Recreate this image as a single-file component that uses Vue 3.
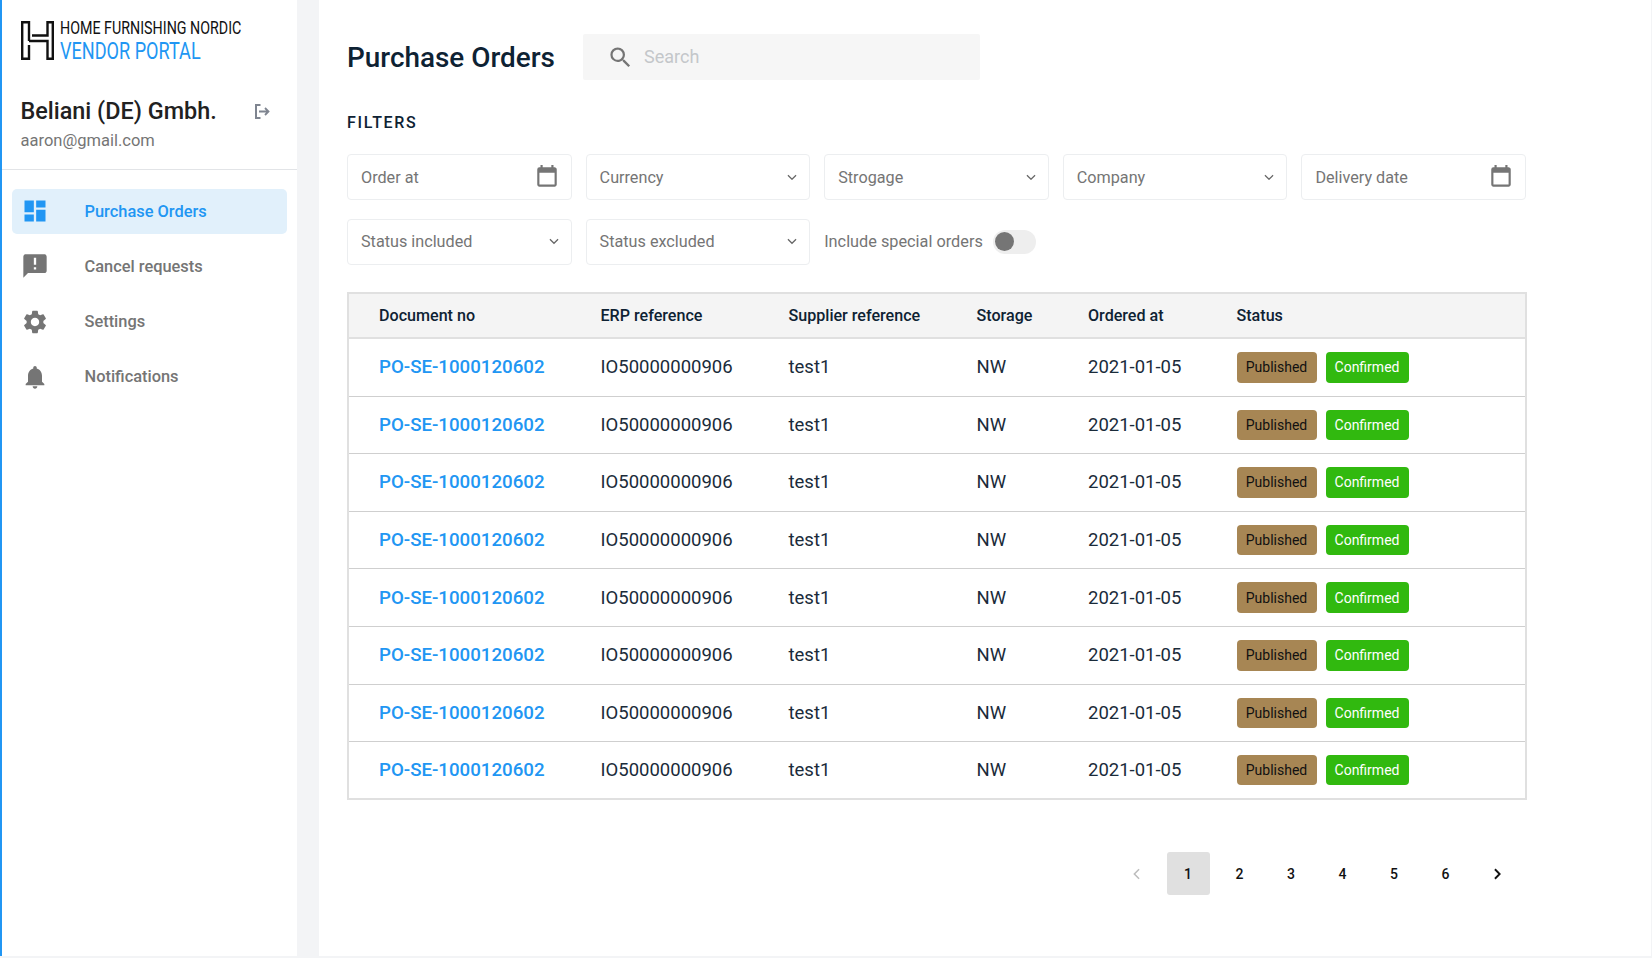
<script setup>
const nav = [
  { label: 'Purchase Orders', icon: 'dash', active: true },
  { label: 'Cancel requests', icon: 'alert' },
  { label: 'Settings', icon: 'gear' },
  { label: 'Notifications', icon: 'bell' }
]
const rows = Array.from({ length: 8 }, (_, i) => i)
const pages = [1, 2, 3, 4, 5, 6]
</script>

<template>
  <div class="page">
    <aside class="sidebar">
      <div class="logo">
        <svg class="logo-mark" viewBox="0 0 33 39" width="33" height="39">
          <path d="M8 20V1.200H1.200v36.600H8V24M8 20h18.500v17.800h5.300V1.200h-5.300v13.300H11" fill="none" stroke="#111" stroke-width="2.400" />
        </svg>
        <div class="logo-text">
          <span class="logo-top">HOME FURNISHING NORDIC</span>
          <span class="logo-bottom">VENDOR PORTAL</span>
        </div>
      </div>
      <div class="account">
        <div class="account-name">
          <span>Beliani (DE) Gmbh.</span>
          <svg viewBox="0 0 16 15" width="16" height="15" class="logout">
            <path d="M5.500 1H1v13h4.500" fill="none" stroke="#7f8590" stroke-width="2" />
            <path d="M4 7.500h9M10 4l3.500 3.500L10 11" fill="none" stroke="#7f8590" stroke-width="1.800" />
          </svg>
        </div>
        <div class="account-mail">aaron@gmail.com</div>
      </div>
      <nav class="nav">
        <a v-for="n in nav" :key="n.label" class="nav-item" :class="{ active: n.active }">
          <svg class="nav-icon" viewBox="0 0 24 24" width="28" height="28">
            <path v-if="n.icon === 'dash'" d="M3 13h8V3H3zm0 8h8v-6H3zm10 0h8V11h-8zm0-18v6h8V3z" />
            <path v-else-if="n.icon === 'alert'" d="M20 2H4c-1.100 0-2 .9-2 2v18l4-4h14c1.100 0 2-.9 2-2V4c0-1.100-.9-2-2-2zm-7 9h-2V5h2zm0 4h-2v-2h2z" />
            <path v-else-if="n.icon === 'gear'" d="M19.140 12.940c.04-.3.060-.61.060-.94 0-.32-.02-.64-.07-.94l2.030-1.580c.18-.14.230-.41.120-.61l-1.920-3.320c-.12-.22-.37-.29-.59-.22l-2.390.96c-.5-.38-1.030-.7-1.620-.94l-.36-2.540c-.04-.24-.24-.41-.48-.41h-3.840c-.24 0-.43.170-.47.41l-.36 2.540c-.59.240-1.130.57-1.620.94l-2.390-.96c-.22-.08-.47 0-.59.220L2.740 8.870c-.12.210-.08.470.12.610l2.030 1.580c-.05.3-.09.630-.09.940s.02.640.07.940l-2.030 1.580c-.18.140-.23.410-.12.610l1.920 3.320c.12.220.37.290.59.220l2.390-.96c.5.380 1.030.7 1.620.94l.36 2.540c.05.240.24.410.48.410h3.840c.24 0 .44-.17.470-.41l.36-2.540c.59-.24 1.130-.56 1.620-.94l2.390.96c.22.080.47 0 .59-.22l1.920-3.320c.12-.22.070-.47-.12-.61zM12 15.600c-1.980 0-3.600-1.620-3.600-3.600s1.620-3.600 3.600-3.600 3.600 1.620 3.600 3.600-1.620 3.600-3.600 3.600z" />
            <path v-else d="M12 22c1.100 0 2-.9 2-2h-4c0 1.100.9 2 2 2zm6-6v-5c0-3.070-1.630-5.640-4.500-6.320V4c0-.83-.67-1.500-1.500-1.500s-1.500.67-1.500 1.500v.68C7.640 5.360 6 7.920 6 11v5l-2 2v1h16v-1z" />
          </svg>
          <span>{{ n.label }}</span>
        </a>
      </nav>
    </aside>
    <div class="gutter"></div>
    <main class="main">
      <header class="head">
        <h1>Purchase Orders</h1>
        <div class="search">
          <svg viewBox="0 0 24 24" width="27" height="27"><path fill="#757575" d="M15.500 14h-.79l-.28-.27A6.470 6.470 0 0 0 16 9.500 6.500 6.500 0 1 0 9.500 16c1.610 0 3.090-.59 4.230-1.570l.27.28v.79l5 4.990L20.490 19zm-6 0C7.010 14 5 11.990 5 9.500S7.010 5 9.500 5 14 7.010 14 9.500 11.990 14 9.500 14z" /></svg>
          <span class="search-text">Search</span>
        </div>
      </header>
      <h2>FILTERS</h2>
      <section class="filters">
        <div class="field"><span>Order at</span>
          <svg viewBox="0 0 24 24" width="26" height="26"><path fill="#757575" d="M19 3h-1V1h-2v2H8V1H6v2H5a2 2 0 0 0-2 2v14c0 1.100.9 2 2 2h14c1.100 0 2-.9 2-2V5c0-1.100-.9-2-2-2zm0 16H5V8h14z" /></svg>
        </div>
        <div v-for="f in ['Currency', 'Strogage', 'Company']" :key="f" class="field"><span>{{ f }}</span>
          <svg class="chev" viewBox="0 0 12 8" width="10" height="6.500"><path d="M1 1.500l5 5 5-5" fill="none" stroke="#666" stroke-width="1.500" /></svg>
        </div>
        <div class="field"><span>Delivery date</span>
          <svg viewBox="0 0 24 24" width="26" height="26"><path fill="#757575" d="M19 3h-1V1h-2v2H8V1H6v2H5a2 2 0 0 0-2 2v14c0 1.100.9 2 2 2h14c1.100 0 2-.9 2-2V5c0-1.100-.9-2-2-2zm0 16H5V8h14z" /></svg>
        </div>
        <div v-for="f in ['Status included', 'Status excluded']" :key="f" class="field second"><span>{{ f }}</span>
          <svg class="chev" viewBox="0 0 12 8" width="10" height="6.500"><path d="M1 1.500l5 5 5-5" fill="none" stroke="#666" stroke-width="1.500" /></svg>
        </div>
        <div class="special second">
          <span>Include special orders</span>
          <span class="switch"><i></i></span>
        </div>
      </section>
      <section class="table">
        <div class="tr th">
          <div>Document no</div><div>ERP reference</div><div>Supplier reference</div><div>Storage</div><div>Ordered at</div><div>Status</div>
        </div>
        <div v-for="r in rows" :key="r" class="tr td">
          <div><a class="doc">PO-SE-1000120602</a></div>
          <div>IO50000000906</div>
          <div>test1</div>
          <div>NW</div>
          <div>2021-01-05</div>
          <div class="badges"><span class="badge pub">Published</span><span class="badge con">Confirmed</span></div>
        </div>
      </section>
      <nav class="pager">
        <span class="pg"><svg viewBox="0 0 10 14" width="9" height="12"><path d="M8 1.500L2.500 7 8 12.500" fill="none" stroke="#bdbdbd" stroke-width="1.800" /></svg></span>
        <span v-for="p in pages" :key="p" class="pg" :class="{ cur: p === 1 }">{{ p }}</span>
        <span class="pg"><svg viewBox="0 0 10 14" width="9" height="12"><path d="M2 1.500L7.500 7 2 12.500" fill="none" stroke="#111" stroke-width="2.200" /></svg></span>
      </nav>
    </main>
  </div>
</template>

<style>
html, body { margin: 0; background: #fff; }
</style>

<style scoped>
.page {
  display: flex;
  width: 1652px;
  height: 958px;
  box-sizing: border-box;
  overflow: hidden;
  font-family: Roboto, "Liberation Sans", sans-serif;
  border-bottom: 2px solid #f3f4f6;
  border-right: 1px solid #f3f4f6;
  background: #fff;
}
.sidebar {
  width: 297px;
  flex: none;
  box-sizing: border-box;
  border-left: 2.500px solid #2196f3;
}
.gutter { width: 22px; flex: none; background: #f3f4f6; }
.logo { display: flex; gap: 6px; padding: 21px 0 0 18.500px; height: 60px; box-sizing: content-box; }
.logo-mark { flex: none; }
.logo-text { display: flex; flex-direction: column; white-space: nowrap; }
.logo-top {
  font-size: 19px; line-height: 20px; color: #111; height: 20px;
  transform: scaleX(.751); transform-origin: left center;
  margin-top: -3px;
}
.logo-bottom {
  font-size: 23.500px; line-height: 26px; color: #2196f3; font-weight: 400;
  transform: scaleX(.77); transform-origin: left center;
}
.account { padding: 15px 18.500px 0 18.500px; height: 89px; box-sizing: border-box; border-bottom: 1px solid #e2e4e7; }
.account-name {
  display: flex; justify-content: space-between; align-items: center;
  font-size: 23.400px; font-weight: 500; color: #212121; line-height: 30px;
  padding-right: 7.500px;
}
.logout { margin-top: 0; }
.account-mail { font-size: 16.500px; color: #757575; line-height: 24px; margin-top: 3px; }
.nav { padding: 18.500px 10px 0 9.500px; display: flex; flex-direction: column; gap: 9.700px; }
.nav-item {
  height: 45.500px; display: flex; align-items: center; border-radius: 5px;
  padding-left: 9px; gap: 36px;
  font-size: 16.400px; font-weight: 500; color: #757575;
}
.nav-item.active { background: #e1f0fb; color: #2196f3; }
.nav-icon { fill: #757575; flex: none; }
.active .nav-icon { fill: #2196f3; }
.main { flex: 1; padding: 34px 0 0 28px; min-width: 0; }
.head { display: flex; align-items: center; height: 46px; }
h1 { margin: 0; font-size: 27.900px; font-weight: 500; color: #0e2233; width: 236px; white-space: nowrap; padding-top: 1px; }
.search {
  width: 397px; height: 46px; background: #f6f6f6; border-radius: 2px;
  display: flex; align-items: center; padding-left: 24px; gap: 10px; box-sizing: border-box;
  font-size: 18px; color: #c4c7ca;
}
.search-text { padding-bottom: 2px; }
h2 { margin: 32.500px 0 0; font-size: 16px; font-weight: 500; line-height: 20px; letter-spacing: 1.700px; color: #0e2233; }
.filters {
  display: grid; grid-template-columns: repeat(5, 224.600px); column-gap: 14px; row-gap: 18.500px;
  margin-top: 21.500px; width: 1180px;
}
.field {
  height: 46px; box-sizing: border-box; border: 1px solid #eceef0; border-radius: 4px;
  display: flex; align-items: center; justify-content: space-between;
  padding: 0 13px; font-size: 16.200px; color: #757575;
}
.field svg { margin-right: -2px; }
.field svg.chev { margin-right: -1px; }
.special { display: flex; align-items: center; gap: 10px; font-size: 16.300px; color: #757575; white-space: nowrap; grid-column: span 2; }
.switch { width: 43px; height: 24px; border-radius: 12px; background: #eeeeee; display: flex; align-items: center; padding-left: 2px; box-sizing: border-box; }
.switch i { display: block; width: 19px; height: 19px; border-radius: 50%; background: #757575; }
.table {
  margin-top: 27.500px; width: 1180px; box-sizing: border-box;
  border: 2px solid #e0e0e0;
}
.tr { display: grid; grid-template-columns: 221.500px 188px 188px 111.500px 148.500px 1fr; padding-left: 30px; align-items: center; box-sizing: border-box; }
.th { height: 45px; background: #f4f4f4; border-bottom: 2px solid #e0e0e0; font-size: 16.100px; font-weight: 500; color: #0e2233; }
.td { height: 57.600px; border-bottom: 1px solid #cfcfcf; font-size: 18.500px; color: #1a2b3a; }
.td:last-child { border-bottom: 0; height: 56px; }
.doc { color: #2196f3; font-weight: 500; font-size: 18.700px; }
.badges { display: flex; gap: 9px; }
.badge { height: 30.500px; box-sizing: border-box; border-radius: 4px; display: flex; align-items: center; justify-content: center; font-size: 14px; }
.pub { width: 80px; background: #a78654; color: #111; }
.con { width: 83px; background: #31b90f; color: #fff; }
.pager { display: flex; margin: 52px 0 0 768px; }
.pg {
  width: 43px; height: 43px; margin-right: 8.500px; border-radius: 3px;
  display: flex; align-items: center; justify-content: center;
  font-size: 14px; font-weight: 500; color: #111;
}
.pg.cur { background: #e0e0e0; }
</style>
